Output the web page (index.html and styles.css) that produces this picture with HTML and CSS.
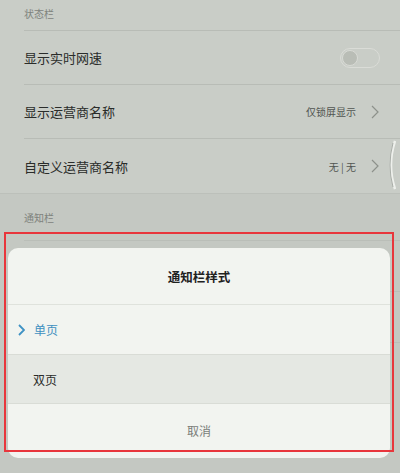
FILE: index.html
```html
<!DOCTYPE html>
<html lang="zh-CN">
<head>
    <meta charset="UTF-8">
    <meta name="viewport" content="width=device-width, initial-scale=1.0">
    <title>通知栏样式</title>
    <link rel="stylesheet" href="styles.css">
</head>
<body>
    <div class="page">
        <div class="section-title first">状态栏</div>
        <div class="row">
            <span class="row-label">显示实时网速</span>
            <span class="switch"><span class="knob"></span></span>
        </div>
        <div class="row">
            <span class="row-label">显示运营商名称</span>
            <span class="row-value">仅锁屏显示</span>
            <svg class="arrow" width="8" height="14" viewBox="0 0 8 14"><path d="M1 1 L7 7 L1 13" fill="none" stroke="#8d918b" stroke-width="1.2"/></svg>
        </div>
        <div class="row last">
            <span class="row-label">自定义运营商名称</span>
            <span class="row-value">无 | 无</span>
            <svg class="arrow" width="8" height="14" viewBox="0 0 8 14"><path d="M1 1 L7 7 L1 13" fill="none" stroke="#8d918b" stroke-width="1.2"/></svg>
        </div>

        <div class="group">
            <div class="section-title">通知栏</div>
            <!-- строки под диалогом, видны только края -->
            <div class="row"></div>
            <div class="row"></div>
            <div class="row"></div>
        </div>

        <svg class="overscroll" width="10" height="50" viewBox="0 0 10 50">
            <path d="M9 1 Q1 25 9 49" fill="none" stroke="#eef0ec" stroke-width="2.5"/>
            <path d="M7 3 Q1 25 7 47" fill="none" stroke="#a3a7a1" stroke-width="0.9"/>
        </svg>
    </div>

    <div class="dialog">
        <div class="dialog-title">通知栏样式</div>
        <div class="option selected">
            <svg class="check" width="7" height="12" viewBox="0 0 7 12"><path d="M1 1 L6 6 L1 11" fill="none" stroke="#3f92c4" stroke-width="1.8"/></svg>
            <span>单页</span>
        </div>
        <div class="option alt"><span>双页</span></div>
        <div class="cancel">取消</div>
    </div>

    <div class="mark"></div>
</body>
</html>
```

FILE: styles.css
```css
body {
    margin: 0;
    padding: 0;
    width: 400px;
    height: 473px;
    overflow: hidden;
    background: #c4c8c2;
    font-family: "Noto Sans CJK SC", "Noto Sans", sans-serif;
    color: #2a2c2a;
    position: relative;
}

.page {
    background: #c9cdc7;
}

.section-title {
    height: 30px;
    line-height: 28px;
    padding-left: 24px;
    font-size: 10px;
    color: #7e827c;
}

.row {
    height: 53px;
    margin-left: 24px;
    padding-right: 21px;
    border-top: 1px solid #b8bcb6;
    display: flex;
    align-items: center;
}

.row.last {
    height: 54px;
}

.row-label {
    flex: 1;
    font-size: 13px;
}

.row-value {
    font-size: 10px;
    color: #515551;
    margin-right: 15px;
}

.arrow {
    display: block;
}

.switch {
    width: 36px;
    height: 18px;
    border: 1px solid #dadcd7;
    border-radius: 10px;
    display: flex;
    align-items: center;
    padding: 0 1px;
    margin-right: -1px;
}

.knob {
    width: 16px;
    height: 16px;
    border-radius: 50%;
    background: #b9bdb6;
    border: 1px solid #d8dad5;
    box-sizing: border-box;
}

.group {
    background: #c4c8c2;
    border-top: 1px solid #bcc0ba;
}

.group .section-title {
    height: 46px;
    line-height: 48px;
}

.group .row {
    height: 50px;
    border-top: 1px solid #babeb8;
}

.overscroll {
    position: absolute;
    right: 4px;
    top: 140px;
}

.dialog {
    position: absolute;
    left: 8px;
    top: 248px;
    width: 382px;
    height: 210px;
    background: #f2f4f0;
    border-radius: 10px;
    overflow: hidden;
    display: flex;
    flex-direction: column;
}

.dialog-title {
    height: 56px;
    border-bottom: 1px solid #dfe2dc;
    display: flex;
    align-items: center;
    justify-content: center;
    font-size: 12.5px;
    font-weight: bold;
    color: #1f211f;
}

.option {
    height: 49px;
    border-bottom: 1px solid #d9dcd6;
    display: flex;
    align-items: center;
    padding-left: 25px;
    font-size: 12px;
    color: #2a2c2a;
}

.option.selected {
    padding-left: 10px;
    color: #3f90c0;
}

.check {
    margin-right: 9px;
}

.option.alt {
    height: 48px;
    background: #e5e8e3;
}

.cancel {
    flex: 1;
    display: flex;
    align-items: center;
    justify-content: center;
    font-size: 12px;
    color: #7a7d79;
    padding-bottom: 2px;
}

.mark {
    position: absolute;
    left: 4px;
    top: 232px;
    width: 390px;
    height: 220px;
    border: 2px solid #e8363c;
    box-sizing: border-box;
}
```
